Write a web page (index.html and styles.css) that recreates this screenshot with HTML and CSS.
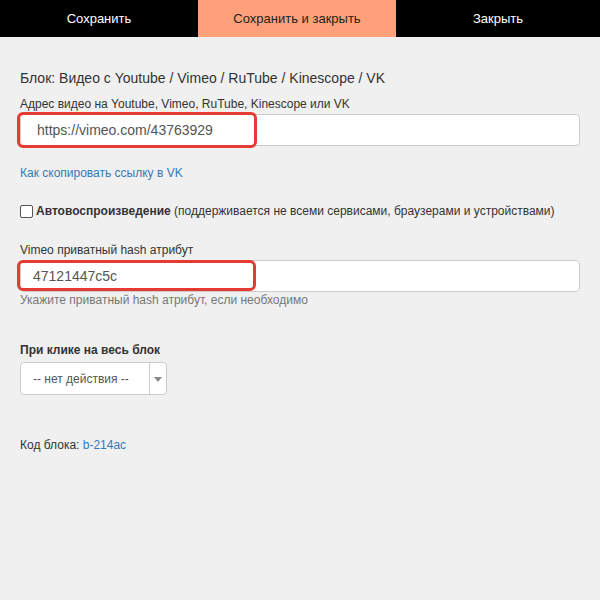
FILE: index.html
```html
<!DOCTYPE html>
<html lang="ru">
<head>
<meta charset="utf-8">
<link rel="stylesheet" href="styles.css">
</head>
<body>
<div class="topbar">
  <div class="tbtn">Сохранить</div>
  <div class="tbtn active">Сохранить и закрыть</div>
  <div class="tbtn">Закрыть</div>
</div>
<div class="content">
  <div class="title">Блок: Видео с Youtube / Vimeo / RuTube / Kinescope / VK</div>
  <div class="label">Адрес видео на Youtube, Vimeo, RuTube, Kinescope или VK</div>
  <div class="field">
    <div class="input url">https://vimeo.com/43763929</div>
    <div class="mark mark1"></div>
  </div>
  <a class="link" href="#">Как скопировать ссылку в VK</a>
  <label class="check"><span class="box"></span><b>Автовоспроизведение</b>&nbsp;(поддерживается не всеми сервисами, браузерами и устройствами)</label>
  <div class="label l2">Vimeo приватный hash атрибут</div>
  <div class="field">
    <div class="input hash">47121447c5c</div>
    <div class="mark mark2"></div>
  </div>
  <div class="hint">Укажите приватный hash атрибут, если необходимо</div>
  <div class="label bold">При клике на весь блок</div>
  <div class="select">
    <span class="sel-text">-- нет действия --</span>
    <span class="sel-arrow"><svg width="8" height="6" viewBox="0 0 8 6"><path d="M0 1h8L4 6z" fill="#888"/></svg></span>
  </div>
  <div class="code">Код блока: <a href="#">b-214ac</a></div>
</div>
</body>
</html>
```
FILE: styles.css
```css
* { box-sizing: border-box; }
html, body { margin: 0; padding: 0; background: #f0f0f0; }
body { font-family: "Liberation Sans", Arial, sans-serif; color: #333; width: 600px; height: 600px; }
.topbar { display: flex; height: 37px; background: #000; }
.tbtn { width: 198px; display: flex; align-items: center; justify-content: center; color: #fff; font-size: 13px; }
.tbtn:last-child { flex: 1; }
.tbtn.active { background: #ffa07a; color: #222; }
.content { padding: 33px 20px 0 20px; display: flex; flex-direction: column; align-items: flex-start; }
.title { font-size: 14px; line-height: 16px; color: #333; margin-bottom: 11px; }
.label { font-size: 12px; line-height: 14px; color: #333; margin-bottom: 3px; }
.label.bold { font-weight: bold; margin-top: 36px; margin-bottom: 5px; }
.field { position: relative; width: 560px; }
.input { width: 560px; height: 32px; background: #fff; border: 1px solid #ccc; border-radius: 4px; font-size: 14px; color: #555; display: flex; align-items: center; }
.input.url { padding-left: 16px; }
.input.hash { padding-left: 12px; }
.mark { position: absolute; border: 3px solid #e53b33; border-radius: 6px; left: -3px; }
.mark1 { top: -2px; width: 240px; height: 36px; }
.mark2 { top: 0; width: 239px; height: 31px; }
.link { font-size: 12px; color: #337ab7; text-decoration: none; margin-top: 20px; line-height: 14px; }
.check { font-size: 12px; display: flex; align-items: center; margin-top: 24px; line-height: 14px; }
.check b { font-size: 12px; }
.box { width: 13px; height: 13px; border: 1px solid #555; border-radius: 2px; background: #fff; margin-right: 3px; }
.l2 { margin-top: 25px; }
.hint { font-size: 12px; color: #777; margin-top: 1px; line-height: 14px; }
.select { width: 147px; height: 33px; background: #fff; border: 1px solid #ccc; border-radius: 4px; display: flex; align-items: stretch; }
.sel-text { width: 129px; font-size: 12px; color: #555; padding-left: 12px; display: flex; align-items: center; border-right: 1px solid #ccc; }
.sel-arrow { flex: 1; display: flex; align-items: center; justify-content: center; }
.code { font-size: 12px; margin-top: 43px; line-height: 14px; }
.code a { color: #337ab7; text-decoration: none; }
```
